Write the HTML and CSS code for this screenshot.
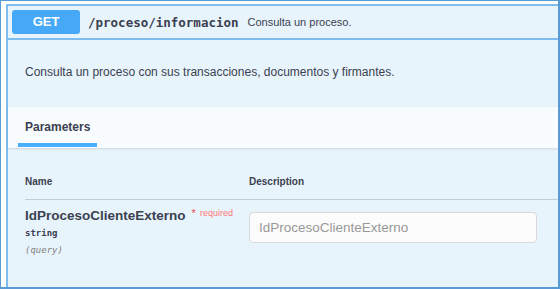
FILE: index.html
```html
<!DOCTYPE html>
<html lang="en">
<head>
    <meta charset="UTF-8">
    <meta name="viewport" content="width=device-width, initial-scale=1.0">
    <title>GET /proceso/informacion</title>
    <link rel="stylesheet" href="styles.css">
</head>
<body>
    <div class="frame">
        <div class="opblock">
            <div class="summary">
                <span class="method">GET</span>
                <span class="path">/proceso/informacion</span>
                <span class="summary-desc">Consulta un proceso.</span>
            </div>

            <div class="description">
                <p>Consulta un proceso con sus transacciones, documentos y firmantes.</p>
            </div>

            <div class="tab-header">
                <span class="tab">Parameters</span>
            </div>

            <div class="params">
                <div class="params-head">
                    <span>Name</span>
                    <span>Description</span>
                </div>
                <div class="param-row">
                    <div class="param-info">
                        <div class="param-name">IdProcesoClienteExterno<span class="req">&nbsp;*<em>required</em></span></div>
                        <div class="param-type">string</div>
                        <div class="param-in">(query)</div>
                    </div>
                    <div class="param-input">
                        <input type="text" placeholder="IdProcesoClienteExterno">
                    </div>
                </div>
            </div>
        </div>
    </div>
</body>
</html>
```

FILE: styles.css
```css
body { margin: 0; font-family: "Liberation Sans", Arial, sans-serif; color: #3b4151; }
.frame { width: 560px; height: 289px; box-sizing: border-box; border: 1px solid #5b9bd5; border-right-width: 2px; border-bottom-width: 2px; padding: 3px 0 0 5px; background: #fff; overflow: hidden; }
.opblock { height: 100%; border-top: 2px solid #7fbdf0; border-left: 2px solid #7fbdf0; background: #e8f4fc; }

.summary { display: flex; align-items: center; height: 32px; padding: 0 4px; border-bottom: 2px solid #7fbdf0; }
.method { width: 68px; height: 24px; line-height: 24px; text-align: center; background: #45a9f8; color: #fff; font-weight: bold; font-size: 13px; border-radius: 3px; }
.path { margin-left: 8px; font-family: "DejaVu Sans Mono", monospace; font-weight: bold; font-size: 12.5px; color: #3b4151; }
.summary-desc { margin-left: 9px; font-size: 11px; color: #3b4151; }

.description { height: 67px; display: flex; align-items: center; padding: 0 17px 3px; box-sizing: border-box; }
.description p { margin: 0; font-size: 12px; }

.tab-header { height: 41px; display: flex; align-items: flex-end; padding-left: 10px; background: #f8fcfe; box-shadow: 0 1px 2px rgba(0,0,0,0.12); }
.tab { font-size: 12px; font-weight: bold; line-height: 14px; padding: 0 7px 9px; border-bottom: 4px solid #49b0fb; margin-bottom: 1px; }

.params { padding: 28px 0 0 17px; }
.params-head { display: grid; grid-template-columns: 224px 1fr; font-size: 10px; font-weight: bold; line-height: 12px; padding-bottom: 11px; border-bottom: 1px solid #c3ccd6; }
.param-row { display: grid; grid-template-columns: 224px 1fr; padding-top: 5px; }
.param-name { font-size: 13.5px; font-weight: bold; line-height: 16px; }
.req { color: #f0484a; font-size: 11px; vertical-align: 3px; font-weight: normal; margin-left: 3px; }
.req em { font-style: normal; font-size: 9px; margin-left: 4px; color: #f77; vertical-align: 1px; }
.param-type { margin-top: 3px; font-family: "DejaVu Sans Mono", monospace; font-weight: bold; font-size: 9px; line-height: 12px; }
.param-in { margin-top: 5px; font-family: "DejaVu Sans Mono", monospace; font-style: italic; font-size: 9px; line-height: 12px; color: #808080; }
.param-input input { margin-top: 7px; width: 288px; height: 31px; box-sizing: border-box; border: 1px solid #d9d9d9; border-radius: 4px; background: #fcfcfc; padding: 0 9px; font-family: "Liberation Sans", Arial, sans-serif; font-size: 13.5px; }
.param-input input::placeholder { color: #999; }
```
